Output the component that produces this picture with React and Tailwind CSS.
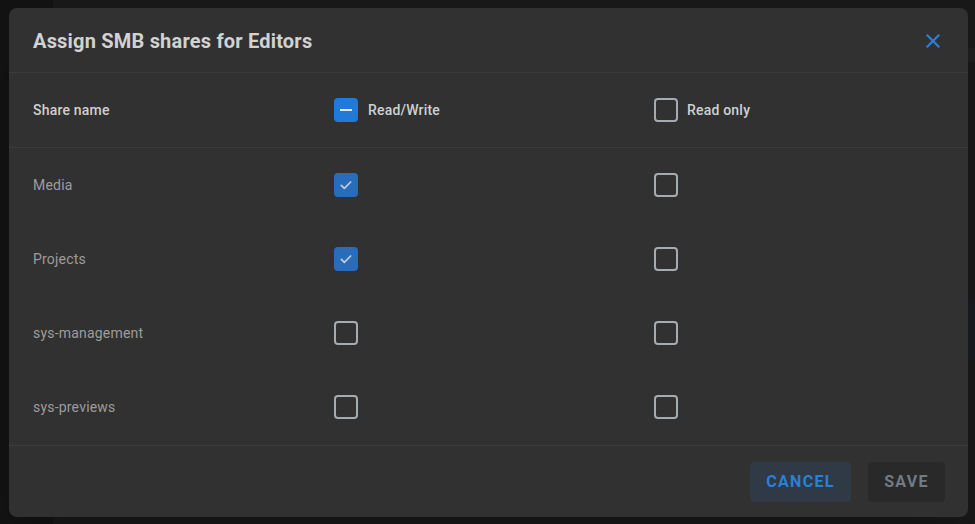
import React from 'react';

const shares = [
  { name: 'Media', rw: true, ro: false },
  { name: 'Projects', rw: true, ro: false },
  { name: 'sys-management', rw: false, ro: false },
  { name: 'sys-previews', rw: false, ro: false },
];

function Box({ checked, mixed, dim }) {
  if (checked || mixed) {
    return (
      <div className={`w-6 h-6 rounded-[4px] flex items-center justify-center ${dim ? 'bg-[#2a6cbc]' : 'bg-[#1f7ad9]'}`}>
        {mixed ? (
          <div className="w-3 h-[2px] bg-[#e6eaee]" />
        ) : (
          <svg width="16" height="16" viewBox="0 0 24 24" fill="none" stroke="#c3ccd6" strokeWidth="2.6" strokeLinecap="round" strokeLinejoin="round">
            <path d="M5 12.5l4.5 4.5L19 7.5" />
          </svg>
        )}
      </div>
    );
  }
  return <div className="w-6 h-6 rounded-[4px] border-2 border-[#a5abb3]" />;
}

export default function App() {
  return (
    <div className="w-[975px] h-[524px] bg-[#191919] relative overflow-hidden font-['Roboto',sans-serif]">
      {/* backdrop page */}
      <div className="absolute left-0 top-0 bottom-0 w-[53px] bg-[#131313]" />
      <div className="absolute right-0 top-[48px] w-[10px] h-[14px] bg-[#1f1f1f]" />
      <div className="absolute right-0 top-[300px] w-[10px] h-[60px] bg-[#181c21]" />

      <div className="absolute left-[9px] top-[8px] w-[959px] h-[509px] rounded-[8px] bg-[#313131] shadow-2xl flex flex-col">
        <div className="h-[65px] flex items-center justify-between pl-6 pr-[28px] pt-[1px] border-b border-[#3c3c3c]">
          <h2 className="text-[20px] font-bold text-[#d2d2d2] tracking-[0.2px]">Assign SMB shares for Editors</h2>
          <svg width="14" height="14" viewBox="0 0 14 14" stroke="#2a80d6" strokeWidth="2.2" strokeLinecap="square">
            <path d="M1.5 1.5l11 11M12.5 1.5l-11 11" />
          </svg>
        </div>

        <div className="grid grid-cols-[301px_320px_1fr] h-[75px] items-center px-6 border-b border-[#3c3c3c]">
          <div className="text-[14px] font-medium text-[#d0d0d0] tracking-[0.2px]">Share name</div>
          <div className="flex items-center gap-[10px]">
            <Box mixed />
            <span className="text-[14px] font-medium text-[#d0d0d0] tracking-[0.2px]">Read/Write</span>
          </div>
          <div className="flex items-center gap-[9px]">
            <Box />
            <span className="text-[14px] font-medium text-[#d0d0d0] tracking-[0.2px]">Read only</span>
          </div>
        </div>

        <div className="flex flex-col border-b border-[#3c3c3c] pb-[1px]">
          {shares.map((s) => (
            <div key={s.name} className="grid grid-cols-[301px_320px_1fr] h-[74px] items-center px-6">
              <div className="text-[14px] text-[#9c9c9c] tracking-[0.2px]">{s.name}</div>
              <div><Box checked={s.rw} dim /></div>
              <div><Box checked={s.ro} dim /></div>
            </div>
          ))}
        </div>

        <div className="flex-1 flex items-center justify-end gap-[17px] pr-[23px] pt-[1px]">
          <button className="h-[40px] w-[101px] rounded-[4px] bg-[#2f3a46] text-[#2a80d6] text-[16px] font-bold tracking-[1.3px]">CANCEL</button>
          <button className="h-[40px] w-[77px] rounded-[4px] bg-[#292929] text-[#727b84] text-[16px] font-bold tracking-[1.3px]">SAVE</button>
        </div>
      </div>
    </div>
  );
}
